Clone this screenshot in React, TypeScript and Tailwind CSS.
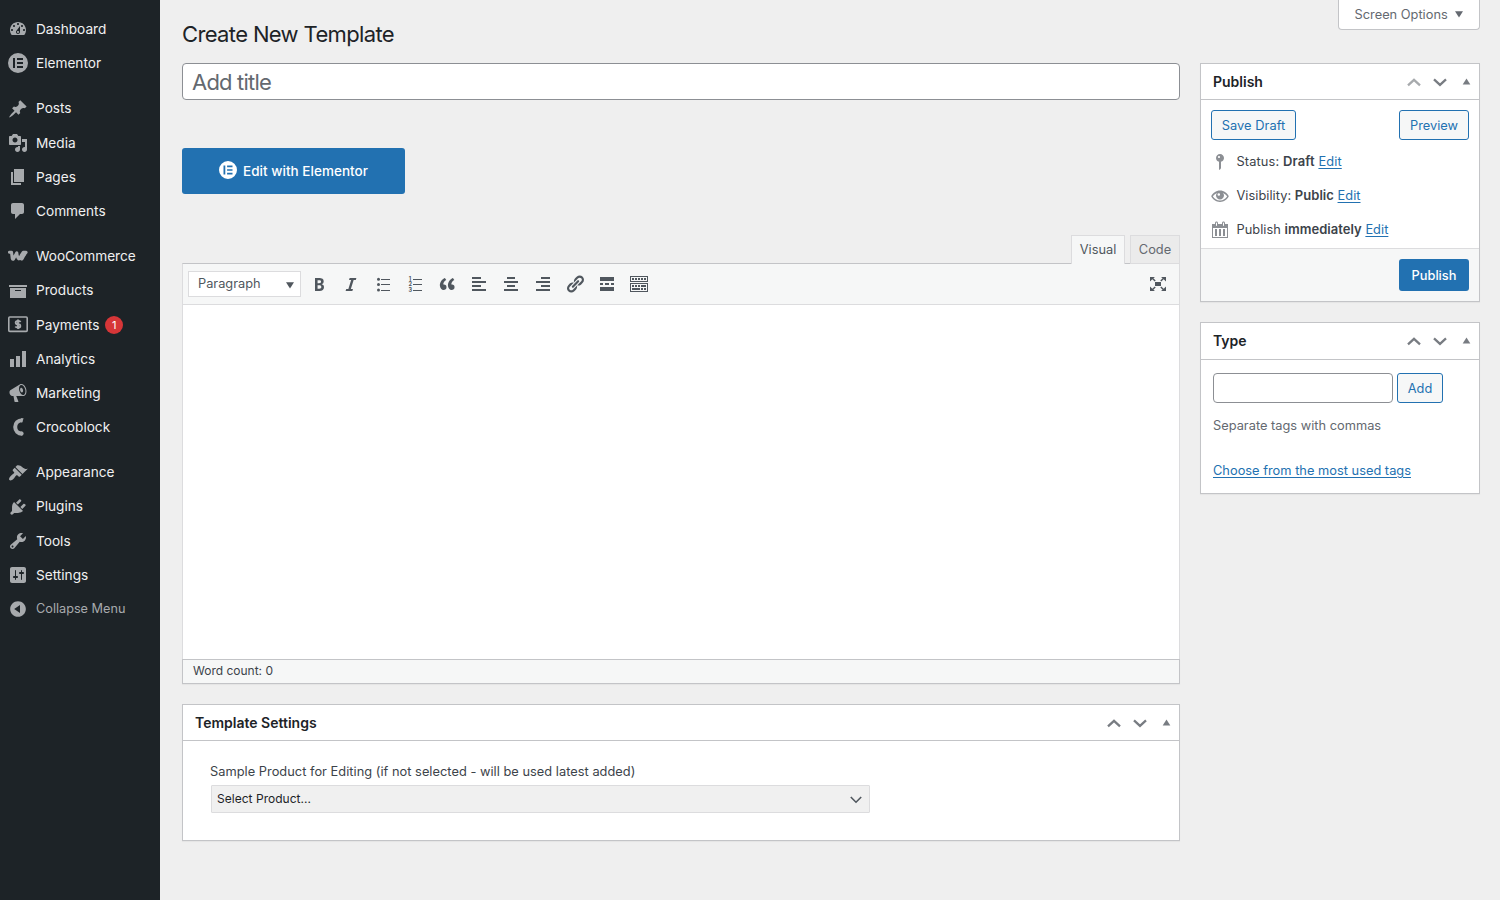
import React from "react";

const P = {
  dashboard:
    "M3.76 16h12.48c1.1-1.37 1.76-3.11 1.76-5 0-4.42-3.58-8-8-8s-8 3.58-8 8c0 1.89.66 3.63 1.76 5zM10 4c.55 0 1 .45 1 1s-.45 1-1 1-1-.45-1-1 .45-1 1-1zM6 6c.55 0 1 .45 1 1s-.45 1-1 1-1-.45-1-1 .45-1 1-1zm8 0c.55 0 1 .45 1 1s-.45 1-1 1-1-.45-1-1 .45-1 1-1zm-5.37 5.55L12 7v6c0 1.1-.9 2-2 2s-2-.9-2-2c0-.57.24-1.08.63-1.45zM4 10c.55 0 1 .45 1 1s-.45 1-1 1-1-.45-1-1 .45-1 1-1zm12 0c.55 0 1 .45 1 1s-.45 1-1 1-1-.45-1-1 .45-1 1-1zm-5 3c0-.55-.45-1-1-1s-1 .45-1 1 .45 1 1 1 1-.45 1-1z",
  post: "M10.44 3.02l1.82-1.82 6.36 6.35-1.83 1.82c-1.05-.68-2.48-.57-3.41.36l-.75.75c-.92.93-1.04 2.35-.35 3.41l-1.83 1.82-2.41-2.41-2.8 2.79c-.42.42-3.38 2.71-3.8 2.29s1.86-3.39 2.28-3.81l2.79-2.79L4.1 9.36l1.83-1.82c1.05.69 2.48.57 3.4-.36l.75-.75c.93-.92 1.05-2.35.36-3.41z",
  media:
    "M13 11V4c0-.55-.45-1-1-1h-1.67L9 1H5L3.67 3H2c-.55 0-1 .45-1 1v7c0 .55.45 1 1 1h10c.55 0 1-.45 1-1zM7 4.5c1.38 0 2.5 1.12 2.5 2.5S8.38 9.5 7 9.5 4.5 8.38 4.5 7 5.62 4.5 7 4.5zM14 6h5v10.5c0 1.38-1.12 2.5-2.5 2.5S14 17.88 14 16.5s1.12-2.5 2.5-2.5c.17 0 .34.02.5.05V9h-3V6zm-4 8.05V13h2v3.5c0 1.38-1.12 2.5-2.5 2.5S7 17.88 7 16.5 8.12 14 9.5 14c.17 0 .34.02.5.05z",
  page: "M6 15V2h10v13H6zm-1 1h8v2H3V5h2v11z",
  comments: "M5 2h9c1.1 0 2 .9 2 2v7c0 1.1-.9 2-2 2h-2l-5 5v-5H5c-1.1 0-2-.9-2-2V4c0-1.1.9-2 2-2z",
  archive: "M19 4v2H1V4h18zM2 7h16v10H2V7zm11 3V9H7v1h6z",
  chart: "M18 18V2h-4v16h4zm-6 0V7H8v11h4zm-6 0v-8H2v8h4z",
  megaphone:
    "M18.15 5.94c.46 1.62.38 3.22-.02 4.48-.42 1.28-1.26 2.18-2.3 2.48-.16.06-.26.06-.4.06-.06.02-.12.02-.18.02-.06.02-.14.02-.22.02h-6.8l2.22 5.5c.02.14-.06.26-.14.34-.08.1-.24.16-.34.16H6.95c-.1 0-.26-.06-.34-.16-.08-.08-.16-.2-.14-.34l-1-5.5H4.25l-.02-.02c-.5.06-1.08-.18-1.54-.62s-.88-1.08-1.06-1.88c-.24-.8-.2-1.56-.02-2.2.18-.62.58-1.08 1.06-1.3l.02-.02 9-5.4c.1-.06.18-.1.24-.16.06-.04.14-.08.24-.12.16-.08.28-.12.5-.18 1.04-.3 2.24.1 3.22.98s1.84 2.24 2.26 3.86zm-2.58 5.98h-.02c.4-.1.74-.34 1.04-.7.58-.7.86-1.76.86-3.04 0-.64-.1-1.3-.28-1.98-.34-1.36-1.02-2.5-1.78-3.24s-1.68-1.1-2.46-.88c-.82.22-1.4.96-1.7 2-.32 1.04-.28 2.36.06 3.72.38 1.36 1 2.5 1.8 3.24.78.74 1.62 1.1 2.48.88zm-2.54-7.08c.22-.04.42-.02.62.04.38.16.76.48 1.02 1s.42 1.2.42 1.78c0 .3-.04.56-.12.8-.18.48-.44.84-.86.94-.34.1-.8-.06-1.14-.4s-.64-.86-.78-1.5c-.18-.62-.12-1.24.02-1.72s.48-.84.82-.94z",
  appearance:
    "M14.48 11.06L7.41 3.99l1.5-1.5c.5-.56 2.3-.47 3.51.32 1.21.8 1.43 1.28 2.91 2.1 1.18.64 2.45 1.26 4.45.85zm-.71.71L6.7 4.7 4.93 6.47c-.39.39-.39 1.02 0 1.41l1.06 1.06c.39.39.39 1.03 0 1.42-.6.6-1.43 1.11-2.21 1.69-.35.26-.7.53-1.01.84C1.43 14.23.4 16.08 1.4 17.07c.99 1 2.84-.03 4.18-1.36.31-.31.58-.66.85-1.02.57-.78 1.08-1.61 1.69-2.21.39-.39 1.02-.39 1.41 0l1.06 1.06c.39.39 1.02.39 1.41 0z",
  plugins:
    "M13.11 4.36L9.87 7.6 8 5.73l3.24-3.24c.35-.34 1.05-.2 1.56.32.52.51.66 1.21.31 1.55zm-8 1.77l.91-1.12 9.01 9.01-1.19.84c-.71.71-2.63 1.16-3.82 1.16H6.14L4.9 17.26c-.59.59-1.54.59-2.12 0-.59-.58-.59-1.53 0-2.12l1.24-1.24v-3.88c0-1.13.4-3.19 1.09-3.89zm7.26 3.97l3.24-3.24c.34-.35 1.04-.21 1.55.31.52.51.66 1.21.31 1.55l-3.24 3.25z",
  tools:
    "M16.68 9.77c-1.34 1.34-3.3 1.67-4.95.99l-5.41 6.52c-.99.99-2.59.99-3.58 0s-.99-2.59 0-3.57l6.52-5.42c-.68-1.65-.35-3.61.99-4.95 1.28-1.28 3.12-1.62 4.72-1.06l-2.89 2.89 2.82 2.82 2.86-2.87c.53 1.58.18 3.39-1.08 4.65zM3.81 16.21c.4.39 1.04.39 1.43 0 .4-.4.4-1.04 0-1.43-.39-.4-1.03-.4-1.43 0-.39.39-.39 1.03 0 1.43z",
  settings:
    "M18 16V4c0-1.1-.9-2-2-2H4c-1.1 0-2 .9-2 2v12c0 1.1.9 2 2 2h12c1.1 0 2-.9 2-2zM8 11h1c.55 0 1 .45 1 1s-.45 1-1 1H8v1.5c0 .28-.22.5-.5.5s-.5-.22-.5-.5V13H6c-.55 0-1-.45-1-1s.45-1 1-1h1V5.5c0-.28.22-.5.5-.5s.5.22.5.5V11zm5-2h-1c-.55 0-1-.45-1-1s.45-1 1-1h1V5.5c0-.28.22-.5.5-.5s.5.22.5.5V7h1c.55 0 1 .45 1 1s-.45 1-1 1h-1v5.5c0 .28-.22.5-.5.5s-.5-.22-.5-.5V9z",
  collapse:
    "M10 2.16c4.33 0 7.84 3.51 7.84 7.84s-3.51 7.84-7.84 7.84S2.16 14.33 2.16 10 5.71 2.16 10 2.16zm2 11.72V6.12L6.18 9.97z",
  bold: "M6 4v13h4.54c1.37 0 2.46-.33 3.26-1 .8-.66 1.2-1.58 1.2-2.77 0-.84-.17-1.51-.51-2.01s-.9-.85-1.67-1.03v-.09c.57-.1 1.02-.4 1.36-.9s.51-1.13.51-1.91c0-1.14-.39-1.98-1.17-2.5C12.75 4.26 11.5 4 9.78 4H6zm2.57 5.15V6.26h1.36c.73 0 1.27.11 1.61.32.34.22.51.58.51 1.07 0 .54-.16.92-.47 1.15s-.82.35-1.51.35h-1.5zm0 2.19h1.6c1.44 0 2.16.53 2.16 1.61 0 .6-.17 1.05-.51 1.34s-.86.43-1.57.43H8.57v-3.38z",
  italic: "M14.78 6h-2.13l-2.8 9h2.12l-.62 2H4.6l.62-2h2.14l2.8-9H8.03l.62-2h6.75z",
  quote:
    "M9.49 13.22c0-.74-.2-1.38-.61-1.9-.62-.78-1.83-.88-2.53-.72-.29-1.65 1.11-3.75 2.92-4.65L7.88 4c-2.73 1.3-5.42 4.28-4.96 8.05C3.21 14.43 4.59 16 6.54 16c.85 0 1.56-.25 2.12-.75s.83-1.18.83-2.03zm8.05 0c0-.74-.2-1.38-.61-1.9-.63-.78-1.83-.88-2.53-.72-.29-1.65 1.11-3.75 2.92-4.65L15.93 4c-2.73 1.3-5.41 4.28-4.95 8.05.29 2.38 1.66 3.95 3.61 3.95.85 0 1.56-.25 2.12-.75s.83-1.18.83-2.03z",
  left: "M12 5V3H3v2h9zm5 4V7H3v2h14zm-5 4v-2H3v2h9zm5 4v-2H3v2h14z",
  center: "M14 5V3H6v2h8zm3 4V7H3v2h14zm-3 4v-2H6v2h8zm3 4v-2H3v2h14z",
  right: "M17 5V3H8v2h9zm0 4V7H3v2h14zm0 4v-2H8v2h9zm0 4v-2H3v2h14z",
  link: "M17.74 2.76c1.68 1.69 1.68 4.41 0 6.1l-1.53 1.52c-1.12 1.12-2.7 1.47-4.14 1.09l2.62-2.61.76-.77.76-.76c.84-.84.84-2.2 0-3.04-.84-.85-2.2-.85-3.04 0l-.77.76-3.38 3.38c-.37-1.44-.02-3.02 1.1-4.14l1.52-1.53c1.69-1.68 4.42-1.68 6.1 0zM8.59 13.43l5.34-5.34c.42-.42.42-1.1 0-1.52-.44-.43-1.13-.39-1.53 0l-5.33 5.34c-.42.42-.42 1.1 0 1.52.44.43 1.13.39 1.52 0zm-.76 2.29l4.14-4.15c.38 1.44.03 3.02-1.09 4.14l-1.52 1.53c-1.69 1.68-4.41 1.68-6.1 0-1.68-1.68-1.68-4.42 0-6.1l1.53-1.52c1.12-1.12 2.7-1.47 4.14-1.1l-4.14 4.15c-.85.84-.85 2.2 0 3.05.84.84 2.2.84 3.04 0z",
  more: "M17 7V3H3v4h14zM6 11V9H3v2h3zm6 0V9H8v2h4zm5 0V9h-3v2h3zm0 6v-4H3v4h14z",
  sink: "M19 2v6H1V2h18zm-1 5V3H2v4h16zM5 4v2H3V4h2zm3 0v2H6V4h2zm3 0v2H9V4h2zm3 0v2h-2V4h2zm3 0v2h-2V4h2zm2 5v9H1V9h18zm-1 8v-7H2v7h16zM5 11v2H3v-2h2zm3 0v2H6v-2h2zm3 0v2H9v-2h2zm6 0v2h-5v-2h5zm-6 3v2H3v-2h8zm3 0v2h-2v-2h2zm3 0v2h-2v-2h2z",
  full: "M7 8h6v4H7zM2 3h5L5.4 4.3l2.3 2.3-1 1-2.4-2.3L2 7.5zM18 3h-5l1.6 1.3-2.3 2.3 1 1 2.4-2.3L18 7.5zM2 17h5l-1.6-1.3 2.3-2.3-1-1-2.4 2.3L2 12.5zM18 17h-5l1.6-1.3-2.3-2.3 1-1 2.4 2.3L18 12.5z",
  pin: "M14 6c0 1.86-1.28 3.41-3 3.86V16c0 1-2 2-2 2V9.86C7.28 9.41 6 7.86 6 6c0-2.21 1.79-4 4-4s4 1.79 4 4zM8 5c0 .55.45 1 1 1s1-.45 1-1-.45-1-1-1-1 .45-1 1z",
  calendar:
    "M15 4h3v14H2V4h3V3c0-.83.67-1.5 1.5-1.5S8 2.17 8 3v1h4V3c0-.83.67-1.5 1.5-1.5S15 2.17 15 3v1zM6 3v2.5c0 .28.22.5.5.5s.5-.22.5-.5V3c0-.28-.22-.5-.5-.5S6 2.72 6 3zm7 0v2.5c0 .28.22.5.5.5s.5-.22.5-.5V3c0-.28-.22-.5-.5-.5s-.5.22-.5.5zm4 14V8H3v9h14zM7 16V9H5v7h2zm4 0V9H9v7h2zm4 0V9h-2v7h2z",
};

function Icon({ d, children, className = "" }: { d?: string; children?: React.ReactNode; className?: string }) {
  return (
    <svg viewBox="0 0 20 20" width="20" height="20" fill="currentColor" className={`block shrink-0 ${className}`}>
      {d ? <path d={d} /> : children}
    </svg>
  );
}

const ElementorMark = () => (
  <Icon>
    <path
      fillRule="evenodd"
      d="M10 0a10 10 0 1 1 0 20 10 10 0 0 1 0-20zM5 5h2v10H5zM9 5h6v1.9H9zM9 9.050h6v1.900H9zM9 13.100h6V15H9z"
    />
  </Icon>
);

const Woo = () => (
  <Icon>
    <path
      d="M1.500 6.300h2L4.300 12.500Q4.700 13.900 5.600 12.700L8.800 6.800Q9.100 10.300 10.300 12.500q.6.9 1.200 0Q13 9.600 15.200 6.400h2.900q-2.600 3.300-3.900 6.200-.5 1-1.100-.1"
      fill="none"
      stroke="currentColor"
      strokeWidth="3.100"
      strokeLinejoin="round"
      strokeLinecap="round"
    />
  </Icon>
);

const Money = () => (
  <Icon>
    <rect x=".8" y="2" width="18.400" height="14.400" rx="1" fill="none" stroke="currentColor" strokeWidth="1.600" />
    <path
      d="M12.600 7Q11.800 5.900 10 5.900q-2.300 0-2.300 1.700T10 9.200t2.300 1.700q0 1.700-2.300 1.700-1.900 0-2.700-1.100M10 4.500v9.500"
      fill="none"
      stroke="currentColor"
      strokeWidth="1.900"
    />
  </Icon>
);

const Croco = () => (
  <Icon>
    <path d="M14.400 3.300C9.800 3.400 7.200 6.300 7.200 10s2.600 6.600 7.200 6.700" fill="none" stroke="currentColor" strokeWidth="4" />
    <circle cx="13.600" cy="16.500" r="2" />
    <path d="M13 1.300h2.600L14.200 5.300H13z" />
  </Icon>
);

type Item = { label: string; icon: React.ReactNode; badge?: string };
const groups: Item[][] = [
  [
    { label: "Dashboard", icon: <Icon d={P.dashboard} /> },
    { label: "Elementor", icon: <ElementorMark /> },
  ],
  [
    { label: "Posts", icon: <Icon d={P.post} /> },
    { label: "Media", icon: <Icon d={P.media} /> },
    { label: "Pages", icon: <Icon d={P.page} /> },
    { label: "Comments", icon: <Icon d={P.comments} /> },
  ],
  [
    { label: "WooCommerce", icon: <Woo /> },
    { label: "Products", icon: <Icon d={P.archive} /> },
    { label: "Payments", icon: <Money />, badge: "1" },
    { label: "Analytics", icon: <Icon d={P.chart} /> },
    { label: "Marketing", icon: <Icon d={P.megaphone} /> },
    { label: "Crocoblock", icon: <Croco /> },
  ],
  [
    { label: "Appearance", icon: <Icon d={P.appearance} /> },
    { label: "Plugins", icon: <Icon d={P.plugins} /> },
    { label: "Tools", icon: <Icon d={P.tools} /> },
    { label: "Settings", icon: <Icon d={P.settings} /> },
  ],
];

function Sidebar() {
  return (
    <nav className="flex w-40 shrink-0 flex-col gap-[11px] bg-[#1d2327] pt-[12.2px]">
      {groups.map((g, i) => (
        <ul key={i}>
          {g.map((m) => (
            <li key={m.label} className="flex h-[34.2px] items-center gap-2 pl-2 text-[13.65px] text-[#f0f0f1]">
              <span className="text-[#a7aaad]">{m.icon}</span>
              <span>{m.label}</span>
              {m.badge && (
                <span className="mt-px -ml-0.5 flex size-[18px] items-center justify-center rounded-full bg-[#d63638] text-[11px] text-white">
                  {m.badge}
                </span>
              )}
            </li>
          ))}
          {i === groups.length - 1 && (
            <li className="flex h-[33.600px] items-center gap-2 pl-2 text-[12.700px] text-[#a7aaad]">
              <Icon d={P.collapse} />
              <span>Collapse Menu</span>
            </li>
          )}
        </ul>
      ))}
    </nav>
  );
}

const Chevron = ({ down, className = "" }: { down?: boolean; className?: string }) => (
  <Icon className={className}>
    <path
      d={down ? "M4 7.400L10 12.900l6-5.500" : "M4 13.400L10 7.900l6 5.500"}
      fill="none"
      stroke="currentColor"
      strokeWidth="2.300"
    />
  </Icon>
);

function BoxHeader({ title, dimUp, className }: { title: string; dimUp?: boolean; className: string }) {
  return (
    <div className={`flex shrink-0 items-center border-b border-[#c3c4c7] pl-3 ${className}`}>
      <h2 className="grow text-[14px] font-semibold text-[#1d2327]">{title}</h2>
      <div className="flex items-center gap-1.5 pr-2 text-[#787c82]">
        <Chevron className={dimUp ? "text-[#a7aaad]" : ""} />
        <Chevron down />
        <svg width="9" height="20" viewBox="0 0 9 20" fill="currentColor" className="ml-1.5">
          <path d="M4.500 6.500L8.300 12.500H.7z" />
        </svg>
      </div>
    </div>
  );
}

const box = "border border-[#c3c4c7] bg-white shadow-[0_1px_1px_rgba(0,0,0,0.04)]";
const btn =
  "flex items-center justify-center rounded-[3px] border border-[#2271b1] bg-[#f6f7f7] pt-px text-[12.8px] text-[#2271b1]";

const Link = ({ children }: { children: React.ReactNode }) => (
  <a className="text-[#2271b1] underline underline-offset-2">{children}</a>
);

const listLines = <path d="M8 5h9v1.100H8zM8 10h9v1.100H8zM8 16h9v1.100H8z" />;

function Toolbar() {
  return (
    <div className="flex h-[41px] shrink-0 items-center border-b border-[#dcdcde] bg-[#f6f7f7] pr-[11px] pl-[5px] text-[#50575e]">
      <div className="mr-2 flex h-[26px] w-[113px] items-center justify-between border border-[#dcdcde] bg-white pr-1.5 pl-[9px] text-[12.8px]">
        <span>Paragraph</span>
        <svg width="8" height="7" viewBox="0 0 8 7" fill="currentColor" className="mt-0.5">
          <path d="M0 .3h8L4 6.500z" />
        </svg>
      </div>
      <div className="flex grow gap-3">
        <Icon d={P.bold} />
        <Icon d={P.italic} />
        <Icon>
          <circle cx="5.500" cy="5.300" r="1.500" />
          <circle cx="5.500" cy="10.500" r="1.500" />
          <circle cx="5.500" cy="16" r="1.500" />
          {listLines}
        </Icon>
        <Icon>
          <path d="M8 5h9v1.100H8zM8 10h9v1.100H8zM8 16h9v1.100H8z" />
          <g fontSize="5.500" fontWeight="700" fontFamily="Inter, sans-serif">
            <text x="3.800" y="6.500">1</text>
            <text x="3.600" y="12">2</text>
            <text x="3.600" y="17.500">3</text>
          </g>
        </Icon>
        <Icon d={P.quote} />
        <Icon d={P.left} />
        <Icon d={P.center} />
        <Icon d={P.right} />
        <Icon d={P.link} />
        <Icon d={P.more} />
        <Icon d={P.sink} />
      </div>
      <Icon d={P.full} />
    </div>
  );
}

function Editor() {
  return (
    <section className="mt-[41px] flex flex-col">
      <div className="relative z-10 -mb-px flex justify-end gap-[5px] text-[12.8px]">
        <div className="flex h-[29px] w-[54px] items-center justify-center border border-b-0 border-[#dcdcde] bg-[#f6f7f7] text-[#50575e]">
          Visual
        </div>
        <div className="flex h-[29px] w-[50px] items-center justify-center border border-[#dcdcde] bg-[#ebebeb] text-[#646970]">
          Code
        </div>
      </div>
      <div className="flex h-[396px] flex-col border border-[#dcdcde] border-t-[#c3c4c7] border-b-0 bg-white">
        <Toolbar />
      </div>
      <div className="flex h-[25px] items-center border border-[#c3c4c7] bg-[#f6f7f7] pb-0.5 pl-2.5 text-[12px] text-[#3c434a] shadow-[0_1px_1px_rgba(0,0,0,0.04)]">
        Word count: 0
      </div>
    </section>
  );
}

function MainColumn() {
  return (
    <div className="flex w-[998px] flex-col">
      <h1 className="flex h-[63px] items-center pt-[5px] text-[22px] tracking-[-0.640px] text-[#1d2327]">
        Create New Template
      </h1>
      <div className="flex h-[37px] items-center rounded-[4px] border border-[#8c8f94] bg-white px-[9px] pt-px text-[22px] tracking-[-0.800px] text-[#646970]">
        Add title
      </div>
      <button className="mt-12 flex h-[46px] w-[223px] items-center justify-center gap-1.5 rounded-[3px] bg-[#2271b1] text-[13.500px] font-medium tracking-[0.030px] text-white">
        <span className="-mt-0.5 [&_svg]:size-[18px]">
          <ElementorMark />
        </span>
        Edit with Elementor
      </button>
      <Editor />
      <section className={`mt-5 flex h-[137px] flex-col ${box}`}>
        <BoxHeader title="Template Settings" className="h-9" />
        <div className="px-7 pt-[21px] text-[#3c434a]">
          <p className="-ml-px text-[12.800px] leading-5 tracking-[0.030px]">
            Sample Product for Editing (if not selected - will be used latest added)
          </p>
          <div className="mt-[3px] flex h-7 w-[659px] items-center justify-between rounded-[1px] border border-[#dcdcde] bg-[#f0f0f0] pr-[7px] pl-[5px] text-[12px] text-[#1d2327]">
            <span className="tracking-[0.030px]">Select Product...</span>
            <svg width="12" height="8" viewBox="0 0 12 8" fill="none" stroke="#50575e" strokeWidth="1.600" className="mt-0.5">
              <path d="M.8 1L6 6.200 11.200 1" />
            </svg>
          </div>
        </div>
      </section>
    </div>
  );
}

function SideColumn() {
  return (
    <div className="flex w-[280px] flex-col text-[12.800px] text-[#3c434a]">
      <div className="flex h-[63px] items-start justify-end">
        <div className="flex h-[30px] w-[142px] items-center gap-[7px] rounded-b-[4px] border border-t-0 border-[#c3c4c7] bg-white pl-[15.500px] tracking-[0.010px] text-[#646970]">
          Screen Options
          <svg width="8" height="7" viewBox="0 0 8 7" fill="currentColor">
            <path d="M0 .3h8L4 6.500z" />
          </svg>
        </div>
      </div>
      <section className={`flex h-[239px] flex-col ${box}`}>
        <BoxHeader title="Publish" dimUp className="h-9" />
        <div className="flex justify-between px-2.5 pt-2.5">
          <button className={`h-[30px] w-[85px] tracking-[0.050px] ${btn}`}>Save Draft</button>
          <button className={`h-[30px] w-[70px] ${btn}`}>Preview</button>
        </div>
        <div className="flex grow flex-col pt-[5px] pl-[9px]">
          <p className="flex h-[34px] items-center gap-[6.500px] tracking-[0.130px]">
            <Icon d={P.pin} className="text-[#8c8f94]" />
            <span>
              Status: <b className="text-[13px] font-semibold">Draft</b> <Link>Edit</Link>
            </span>
          </p>
          <p className="flex h-[34px] items-center gap-[6.500px] tracking-[0.040px]">
            <Icon className="text-[#8c8f94]">
              <path
                fillRule="evenodd"
                d="M10 4.600c4 0 7.200 2.600 8.800 5.700-1.600 3.100-4.800 5.700-8.800 5.700S2.800 13.400 1.200 10.300C2.800 7.200 6 4.600 10 4.600zM7 6.900c-1.800.7-3.300 2-4.200 3.400 1.500 2.400 4.100 4.200 7.200 4.200s5.700-1.800 7.200-4.200c-.9-1.400-2.400-2.700-4.200-3.400.7.7 1 1.500 1 2.500 0 2.200-1.800 4-4 4s-4-1.800-4-4c0-1 .3-1.800 1-2.500zM8.800 7.200a1.300 1.300 0 1 0 0 2.600 1.300 1.300 0 0 0 0-2.600z"
              />
            </Icon>
            <span>
              Visibility: <b className="text-[13px] font-semibold">Public</b> <Link>Edit</Link>
            </span>
          </p>
          <p className="flex h-[34px] items-center gap-[6.500px] tracking-[0.040px]">
            <Icon d={P.calendar} className="text-[#8c8f94]" />
            <span>
              Publish <b className="text-[13px] font-semibold">immediately</b> <Link>Edit</Link>
            </span>
          </p>
        </div>
        <div className="flex h-[53px] shrink-0 items-center justify-end border-t border-[#dcdcde] bg-[#f6f7f7] pr-2.5">
          <button className="h-8 w-[70px] rounded-[3px] bg-[#2271b1] pt-px font-medium text-white">Publish</button>
        </div>
      </section>
      <section className={`mt-5 flex h-[172px] flex-col ${box}`}>
        <BoxHeader title="Type" className="h-[37px] pb-px" />
        <div className="px-3 pt-[13px]">
          <div className="flex gap-1">
            <input className="h-[30px] w-[180px] rounded-[4px] border border-[#8c8f94] bg-white" />
            <button className={`h-[30px] w-[46px] ${btn}`}>Add</button>
          </div>
          <p className="mt-[13px] leading-5 tracking-[0.010px] text-[#646970]">Separate tags with commas</p>
          <p className="mt-[25px] leading-5 tracking-[0.020px]">
            <Link>Choose from the most used tags</Link>
          </p>
        </div>
      </section>
    </div>
  );
}

export default function App() {
  return (
    <div className="flex h-[900px] w-[1500px] overflow-hidden bg-[#efefef] font-['Inter',sans-serif]">
      <Sidebar />
      <main className="flex gap-5 pl-[22px]">
        <MainColumn />
        <SideColumn />
      </main>
    </div>
  );
}
